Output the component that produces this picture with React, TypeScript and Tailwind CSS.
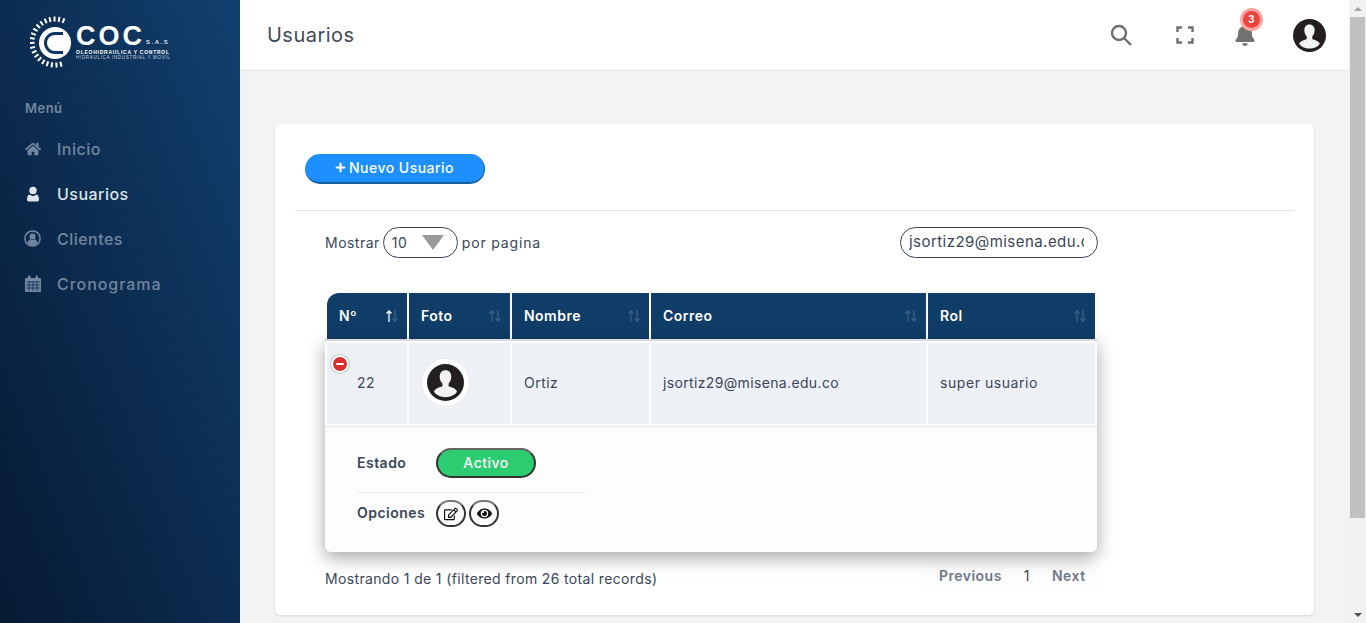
import { FaBell, FaEye, FaHome, FaPlus, FaRegEdit } from 'react-icons/fa';
import type { ReactNode } from 'react';

const font = "font-['Inter','Noto_Sans',sans-serif]";
const logoFont = "font-['Liberation_Sans',sans-serif]";

function Avatar({ size }: { size: number }) {
  return (
    <svg width={size} height={size} viewBox="0 0 48 48">
      <circle cx="24" cy="24" r="24" fill="#231f20" />
      <path d="M24 8c-5 0-7.500 3.500-7.500 8.500 0 3.500 1.500 7 3.500 9v3.500c-3.500 1.500-9.500 2.500-11 7 2.500 4 8 7 15 7s12.500-3 15-7c-1.500-4.500-7.500-5.500-11-7v-3.500c2-2 3.500-5.500 3.500-9C31.500 11.500 29 8 24 8z" fill="#f2f2f2" />
    </svg>
  );
}

function Logo() {
  const rays = Array.from({ length: 20 }, (_, i) => 165 + i * 11.4);
  return (
    <div className="flex items-start h-[71px] pl-[30px] pt-[16px]">
      <svg width="46" height="52" viewBox="0 0 46 52" className="shrink-0">
        {rays.map(a => (
          <rect key={a} x="24" y="0.500" width="2" height="5" fill="#fff" transform={`rotate(${a} 25 26)`} />
        ))}
        <circle cx="25" cy="27" r="16" fill="#fff" />
        <path d="M33 17.500H25a9.500 9.500 0 0 0 0 19h8" fill="none" stroke="#0e3461" strokeWidth="3" />
      </svg>
      <div className="mt-[10px] flex flex-col text-white">
        <div className="flex items-end h-[20px]">
          <span className={`${logoFont} font-bold text-[27px] leading-[20px] tracking-[3px]`}>COC</span>
          <span className={`${logoFont} font-bold text-[6px] leading-[8px] ml-[1px] tracking-[1.500px] text-[#dfe5ec]`}>S.A.S</span>
        </div>
        <span className={`${logoFont} font-bold text-[5px] leading-[6px] mt-[3px] tracking-[0.750px] whitespace-nowrap`}>OLEOHIDRAULICA Y CONTROL</span>
        <span className={`${logoFont} text-[4.500px] leading-[5px] tracking-[0.700px] whitespace-nowrap text-[#c9d3df]`}>HIDRAULICA INDUSTRIAL Y MOVIL</span>
      </div>
    </div>
  );
}

function UserIcon() {
  return (
    <svg width="16" height="16" viewBox="0 0 16 16" fill="currentColor">
      <circle cx="8" cy="4.500" r="3.700" />
      <path d="M3.500 15.500A1.800 1.800 0 0 1 2 13.700c0-2.700.6-5 2.700-5.200C5.600 9.400 6.700 10 8 10s2.400-.6 3.300-1.500c2.100.2 2.700 2.500 2.700 5.200a1.800 1.800 0 0 1-1.500 1.800z" />
    </svg>
  );
}

function ClientIcon() {
  return (
    <svg width="17" height="17" viewBox="0 0 17 17" className="-ml-[1px]">
      <circle cx="8.500" cy="8.500" r="7.600" fill="none" stroke="currentColor" strokeWidth="1.500" />
      <circle cx="8.500" cy="6.500" r="3" fill="currentColor" />
      <path d="M3.500 13c.4-2.500 2-3.500 3-3.700.6.400 1.300.6 2 .6s1.400-.2 2-.6c1 .2 2.600 1.200 3 3.700a6.800 6.800 0 0 1-10 0z" fill="currentColor" />
    </svg>
  );
}

function CalendarIcon() {
  return (
    <svg width="16" height="17" viewBox="0 0 16 17">
      <path d="M1 3h14a1 1 0 0 1 1 1v12a1 1 0 0 1-1 1H1a1 1 0 0 1-1-1V4a1 1 0 0 1 1-1z" fill="currentColor" />
      <rect x="3" y="0.500" width="2.500" height="4" rx="1" fill="currentColor" />
      <rect x="10.500" y="0.500" width="2.500" height="4" rx="1" fill="currentColor" />
      <path d="M1.200 7h13.600M1.200 10h13.600M1.200 13h13.600M4 6v10M8 6v10M12 6v10" stroke="#0c2c55" strokeWidth="0.800" fill="none" />
    </svg>
  );
}

function NavItem({ icon, label, active, wide }: { icon: ReactNode; label: string; active?: boolean; wide?: boolean }) {
  return (
    <div className={`flex items-center h-[45px] pl-[25px] pb-[2px] ${active ? 'text-[#dfe4eb]' : 'text-[#73869f]'}`}>
      <span className="w-[32px] text-[16px] flex">{icon}</span>
      <span className={`text-[16px] font-medium ${wide ? 'tracking-[0.06em]' : 'tracking-[0.03em]'}`}>{label}</span>
    </div>
  );
}

function SortIcon({ on }: { on?: boolean }) {
  return (
    <svg width="14" height="14" viewBox="0 0 14 14" className="shrink-0" fill="none" strokeWidth="1.300">
      <path d="M4 13V2M1.500 4.500 4 2l2.500 2.500" stroke={on ? '#ffffff' : '#3d5f85'} />
      <path d="M10 1v11M7.500 9.500 10 12l2.500-2.500" stroke="#3d5f85" />
    </svg>
  );
}

function HeadCell({ label, on }: { label: string; on?: boolean }) {
  return (
    <div className="h-[46px] bg-[#103c68] flex items-center justify-between pl-[12px] pr-[8px] pb-[1px] text-white text-[14px] font-semibold first:rounded-tl-[12px]">
      <span className="-mt-[1px]">{label}</span>
      <SortIcon on={on} />
    </div>
  );
}

function BodyCell({ children }: { children: ReactNode }) {
  return <div className="h-[81px] bg-[#edf1f5] flex items-center pl-[12px] pb-[2px] text-[14px] text-[#3a4658]">{children}</div>;
}

export default function App() {
  const columns = 'grid grid-cols-[80px_101px_137px_275px_167px] gap-x-[2px]';

  return (
    <div className={`flex h-[623px] w-full overflow-hidden bg-[#f3f3f3] text-[#3a4658] tracking-[0.03em] ${font}`}>
      <aside className="w-[240px] shrink-0 bg-linear-to-tr from-[#071a33] to-[#114070] flex flex-col">
        <Logo />
        <div className="pl-[25px] mt-[30px] h-[16px] flex items-center text-[13px] font-semibold text-[#73869f]">Menú</div>
        <nav className="mt-[10px] flex flex-col">
          <NavItem icon={<FaHome />} label="Inicio" />
          <NavItem icon={<UserIcon />} label="Usuarios" active />
          <NavItem icon={<ClientIcon />} label="Clientes" />
          <NavItem icon={<CalendarIcon />} label="Cronograma" wide />
        </nav>
      </aside>

      <main className="flex-1 min-w-0 flex flex-col">
        <header className="h-[71px] shrink-0 bg-white border-b border-[#e6e6e6] flex items-center pl-[27px]">
          <h1 className="text-[20px] font-normal text-[#3f4a5a] flex-1">Usuarios</h1>
          <div className="flex items-center">
            <svg width="24" height="24" viewBox="0 0 24 24" fill="none" stroke="#6f6f6f" strokeWidth="2.400" className="mr-[43px]">
              <circle cx="10" cy="10" r="7" />
              <path d="m15 15 7 7" />
            </svg>
            <svg width="18" height="18" viewBox="0 0 18 18" fill="none" stroke="#6f6f6f" strokeWidth="2.400" className="mr-[40px]">
              <path d="M1.500 6V1.500H6M12 1.500h4.500V6M16.500 12v4.500H12M6 16.500H1.500V12" />
            </svg>
            <div className="relative mr-[37px]">
              <FaBell className="text-[#717171] text-[22px]" />
              <span className="absolute -top-[13px] left-[9px] w-[17px] h-[17px] rounded-full bg-[#f0413a] ring-[3px] ring-[#f9a8a3] text-white text-[10px] font-bold flex items-center justify-center">3</span>
            </div>
            <div className="mr-[23px] flex">
              <Avatar size={33} />
            </div>
          </div>
        </header>

        <div className="flex-1 min-h-0 pt-[53px] pl-[35px] pr-[35px]">
          <section className="h-[491px] bg-white rounded-[5px] shadow-sm flex flex-col px-[20px]">
            <div className="h-[87px] shrink-0 border-b border-[#e4e4e4] pl-[10px] pt-[30px]">
              <button className="w-[180px] h-[30px] rounded-full bg-[#1e8fff] border-b-2 border-r border-[#16609f] text-white text-[14px] font-medium flex items-center justify-center gap-[3px] pb-[2px]">
                <FaPlus className="text-[11px]" />
                Nuevo Usuario
              </button>
            </div>

            <div className="flex items-center h-[32px] mt-[15px] pl-[30px] text-[14px] w-[803px] justify-between">
              <div className="flex items-center gap-[3px]">
                <span>Mostrar</span>
                <div className="w-[75px] h-[31px] rounded-full border border-[#3a4658] flex items-center justify-between pl-[8px] pr-[13px]">
                  <span>10</span>
                  <span className="w-0 h-0 border-x-[11px] border-x-transparent border-t-[15px] border-t-[#999999]" />
                </div>
                <span className="ml-[1px] tracking-[0.06em]">por pagina</span>
              </div>
              <div className="w-[198px] h-[31px] rounded-full border border-[#3a4658] pl-[8px] pr-[13px] flex items-center overflow-hidden">
                <span className="whitespace-nowrap overflow-hidden text-[15px] tracking-[0.03em]">jsortiz29@misena.edu.co</span>
              </div>
            </div>

            <div className="mt-[35px] ml-[32px] w-[770px] flex flex-col relative">
              <div className={columns}>
                <HeadCell label="Nº" on />
                <HeadCell label="Foto" />
                <HeadCell label="Nombre" />
                <HeadCell label="Correo" />
                <HeadCell label="Rol" />
              </div>
            </div>

            <div className="mt-[0px] ml-[30px] w-[772px] h-[213px] shrink-0 rounded-b-[6px] bg-[#fdfdfd] border-t-[2px] border-[#d8dbde] shadow-[0_6px_18px_rgba(0,0,0,0.35)] flex flex-col pt-[2px] relative">
              <div className={`${columns} ml-[2px]`}>
                <BodyCell>
                  <span className="pl-[18px]">22</span>
                </BodyCell>
                <BodyCell>
                  <span className="w-[49px] h-[49px] rounded-full bg-white border border-[#e9e9e9] flex items-center justify-center">
                    <Avatar size={37} />
                  </span>
                </BodyCell>
                <BodyCell>Ortiz</BodyCell>
                <BodyCell>
                  <span className="tracking-[0.025em]">jsortiz29@misena.edu.co</span>
                </BodyCell>
                <BodyCell>
                  <span className="tracking-[0.04em]">super usuario</span>
                </BodyCell>
              </div>
              <span className="absolute left-[6px] top-[14px] w-[18px] h-[18px] rounded-full bg-[#d9302e] border-2 border-white shadow-[0_0_2px_rgba(0,0,0,0.5)] flex items-center justify-center">
                <span className="w-[8px] h-[2px] bg-white rounded-[1px]" />
              </span>
              <div className="mt-[2px] border-t border-[#e2e5e9] pl-[32px] pt-[21px]">
                <div className="flex items-center">
                  <span className="w-[79px] text-[14px] font-semibold pb-[2px]">Estado</span>
                  <span className="w-[100px] h-[30px] rounded-full bg-[#2ecc71] border-2 border-[#333] border-t-[#666] text-white text-[14px] font-medium flex items-center justify-center pb-[1px]">Activo</span>
                </div>
                <div className="w-[229px] border-t border-[#eceef0] mt-[14px]" />
                <div className="flex items-center mt-[7px]">
                  <span className="w-[79px] text-[14px] font-semibold pb-[2px]">Opciones</span>
                  <span className="w-[30px] h-[27px] rounded-full border-2 border-[#333] border-t-[#777] flex items-center justify-center text-[#111] text-[14px]">
                    <FaRegEdit />
                  </span>
                  <span className="ml-[3px] w-[30px] h-[27px] rounded-full border-2 border-[#333] border-t-[#777] flex items-center justify-center text-[#111] text-[15px]">
                    <FaEye />
                  </span>
                </div>
              </div>
            </div>

            <div className="ml-[30px] mt-[8px] w-[772px] flex justify-between items-start">
              <span className="text-[14px] mt-[8px] tracking-[0.025em]">Mostrando 1 de 1 (filtered from 26 total records)</span>
              <div className="w-[170px] h-[32px] bg-[#fdfdfd] rounded-[4px] flex items-center pl-[12px] pb-[2px] text-[14px]">
                <span className="font-semibold text-[#6f7a8a]">Previous</span>
                <span className="ml-[22px] text-[#3a4658]">1</span>
                <span className="ml-[22px] font-semibold text-[#6f7a8a]">Next</span>
              </div>
            </div>
          </section>
        </div>
      </main>

      <div className="w-[17px] shrink-0 bg-[#f1f1f1] flex flex-col items-center">
        <div className="h-[17px] flex items-center justify-center">
          <span className="w-0 h-0 border-x-[4px] border-x-transparent border-b-[4px] border-b-[#a3a3a3]" />
        </div>
        <div className="w-[15px] h-[501px] bg-[#c1c1c1]" />
        <div className="flex-1" />
        <div className="h-[17px] flex items-center justify-center">
          <span className="w-0 h-0 border-x-[4px] border-x-transparent border-t-[4px] border-t-[#505050]" />
        </div>
      </div>
    </div>
  );
}
